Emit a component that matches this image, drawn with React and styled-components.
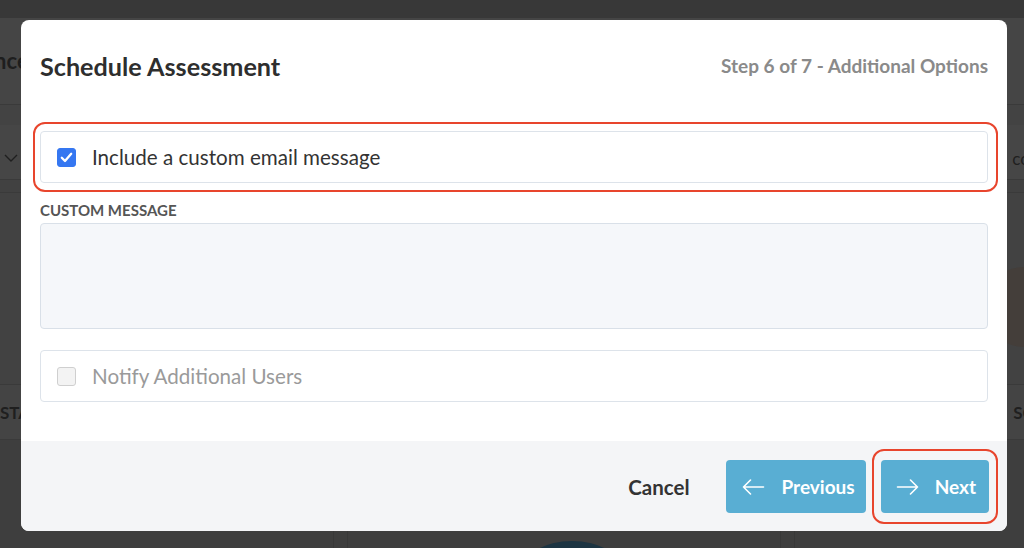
import React from "react";
import styled, { createGlobalStyle } from "styled-components";

const GlobalStyle = createGlobalStyle`
  * { box-sizing: border-box; }
  html, body {
    margin: 0;
    padding: 0;
    width: 1024px;
    height: 548px;
    overflow: hidden;
    font-family: Lato, "Open Sans", Arial, sans-serif;
  }
`;

/* ---------- dimmed page behind the modal ---------- */

const Page = styled.div`
  position: relative;
  width: 1024px;
  height: 548px;
  overflow: hidden;
  background: #3e3e3e;
  display: flex;
  flex-direction: column;
`;

const TopBar = styled.div`
  height: 18px;
  background: #383838;
  flex: none;
`;

const PageHeader = styled.div`
  height: 87px;
  background: #454545;
  border-bottom: 1px solid #3a3a3a;
  display: flex;
  align-items: center;
  flex: none;
`;

const PageTitle = styled.h2`
  margin: 0 0 2px -86px;
  font-size: 22px;
  font-weight: 700;
  color: #1e1e1e;
`;

const Strip = styled.div`
  height: ${(p) => p.$h}px;
  background: ${(p) => p.$bg};
  border-bottom: ${(p) => (p.$line ? "1px solid #3a3a3a" : "none")};
  display: flex;
  align-items: center;
  justify-content: space-between;
  flex: none;
  position: relative;
`;

const BgText = styled.span`
  font-size: 17px;
  font-weight: ${(p) => (p.$bold ? 700 : 400)};
  color: #1f1f1f;
  margin: ${(p) => p.$m || "0"};
  white-space: nowrap;
`;

const Chevron = styled.svg`
  margin-left: 4px;
  margin-top: 12px;
`;

const Blob = styled.div`
  position: absolute;
  right: -40px;
  top: 74px;
  width: 80px;
  height: 80px;
  border-radius: 50%;
  background: #443e3a;
`;

const Rest = styled.div`
  flex: 1;
  background: #3e3e3e;
  position: relative;
  display: flex;
`;

const VLine = styled.div`
  width: 1px;
  background: #383838;
  margin-left: ${(p) => p.$ml}px;
`;

const DarkCircle = styled.div`
  position: absolute;
  left: 522px;
  top: 101px;
  width: 100px;
  height: 60px;
  border-radius: 50%;
  background: #1c3442;
`;

/* ---------- modal ---------- */

const Modal = styled.div`
  position: absolute;
  left: 21px;
  top: 20px;
  width: 986px;
  height: 511px;
  background: #fff;
  border-radius: 8px;
  overflow: hidden;
  display: flex;
  flex-direction: column;
`;

const Body = styled.div`
  flex: 1;
  padding: 31px 19px 0 19px;
  display: flex;
  flex-direction: column;
`;

const Header = styled.div`
  display: flex;
  justify-content: space-between;
  align-items: center;
  line-height: 30px;
`;

const Title = styled.h1`
  margin: 0;
  font-size: 25.2px;
  font-weight: 700;
  color: #2e2e2e;
`;

const StepText = styled.span`
  font-size: 19px;
  font-weight: 700;
  color: #8a8a8a;
`;

const OptionWrap = styled.div`
  position: relative;
  margin-top: ${(p) => p.$mt}px;
`;

const OptionBox = styled.label`
  height: 52px;
  border: 1px solid #dde3ea;
  border-radius: 4px;
  background: #fff;
  display: flex;
  align-items: center;
  padding-left: 16px;
  gap: 16px;
`;

const Check = styled.span`
  width: 19px;
  height: 19px;
  border-radius: 3px;
  flex: none;
  display: flex;
  align-items: center;
  justify-content: center;
  background: ${(p) => (p.$on ? "#3577f1" : "#f3f3f3")};
  border: 1px solid ${(p) => (p.$on ? "#3577f1" : "#cfcfcf")};
`;

const OptionText = styled.span`
  font-size: 20.6px;
  color: ${(p) => (p.$muted ? "#9a9a9a" : "#333")};
`;

const Annotation = styled.div`
  position: absolute;
  left: ${(p) => p.$l}px;
  right: ${(p) => p.$r}px;
  top: ${(p) => p.$t}px;
  bottom: ${(p) => p.$b}px;
  border: 2.5px solid #e8452d;
  border-radius: 12px;
  pointer-events: none;
`;

const FieldLabel = styled.div`
  margin-top: 19px;
  font-size: 15px;
  line-height: 17px;
  font-weight: 700;
  color: #555;
  text-transform: uppercase;
`;

const MessageArea = styled.div`
  margin-top: 4px;
  height: 106px;
  border: 1px solid #d9e0e8;
  border-radius: 4px;
  background: #f5f7fa;
`;

const Footer = styled.div`
  height: 90px;
  flex: none;
  background: #f4f5f7;
  display: flex;
  align-items: center;
  justify-content: flex-end;
  padding: 1px 18px 0 0;
`;

const CancelButton = styled.button`
  border: none;
  background: transparent;
  font-family: inherit;
  font-size: 20.5px;
  font-weight: 700;
  color: #333;
  padding: 0;
  margin-right: 37px;
  cursor: pointer;
`;

const NavButton = styled.button`
  height: 53px;
  border: none;
  border-radius: 4px;
  background: #59aed3;
  color: #fff;
  font-family: inherit;
  font-size: 19px;
  font-weight: 700;
  display: flex;
  align-items: center;
  gap: 16px;
  padding: 0 ${(p) => p.$pr}px 0 ${(p) => p.$pl}px;
  cursor: pointer;
`;

const NextWrap = styled.div`
  position: relative;
  margin-left: 15px;
`;

const Arrow = ({ dir }) => (
  <svg width="23" height="16" viewBox="0 0 23 16" fill="none" stroke="#fff" strokeWidth="1.6" strokeLinecap="round" strokeLinejoin="round">
    {dir === "left" ? (
      <path d="M1.5 8h20M8.5 1 1.5 8l7 7" />
    ) : (
      <path d="M1.5 8h20M14.5 1l7 7-7 7" />
    )}
  </svg>
);

const Tick = () => (
  <svg width="13" height="11" viewBox="0 0 13 11" fill="none" stroke="#fff" strokeWidth="2.3" strokeLinecap="round" strokeLinejoin="round">
    <path d="M1.8 5.8 5 9 11.2 1.8" />
  </svg>
);

export default function App() {
  return (
    <>
      <GlobalStyle />
      <Page>
        <TopBar />
        <PageHeader>
          <PageTitle>Compliance</PageTitle>
        </PageHeader>
        <Strip $h={20} $bg="#434343" />
        <Strip $h={55} $bg="#464646" $line>
          <Chevron width="14" height="9" viewBox="0 0 14 9" fill="none" stroke="#1f1f1f" strokeWidth="1.4">
            <path d="M1 1l6 6 6-6" />
          </Chevron>
          <BgText $m="12px -44px 0 0">contact</BgText>
        </Strip>
        <Strip $h={13} $bg="#414141" $line />
        <Strip $h={192} $bg="#424242" $line>
          <Blob />
        </Strip>
        <Strip $h={55} $bg="#444444" $line>
          <BgText $bold $m="0 0 0 0">STATUS</BgText>
          <BgText $bold $m="0 -44px 0 0">SCORE</BgText>
        </Strip>
        <Rest>
          <VLine $ml={333} />
          <VLine $ml={13} />
          <VLine $ml={432} />
          <VLine $ml={13} />
          <DarkCircle />
        </Rest>

        <Modal>
          <Body>
            <Header>
              <Title>Schedule Assessment</Title>
              <StepText>Step 6 of 7 - Additional Options</StepText>
            </Header>

            <OptionWrap $mt={50}>
              <OptionBox>
                <Check $on>
                  <Tick />
                </Check>
                <OptionText>Include a custom email message</OptionText>
              </OptionBox>
              <Annotation $l={-7} $r={-10} $t={-9} $b={-9} />
            </OptionWrap>

            <FieldLabel>Custom Message</FieldLabel>
            <MessageArea />

            <OptionWrap $mt={21}>
              <OptionBox>
                <Check />
                <OptionText $muted>Notify Additional Users</OptionText>
              </OptionBox>
            </OptionWrap>
          </Body>

          <Footer>
            <CancelButton>Cancel</CancelButton>
            <NavButton $pl={16} $pr={11}>
              <Arrow dir="left" />
              Previous
            </NavButton>
            <NextWrap>
              <NavButton $pl={15} $pr={13}>
                <Arrow dir="right" />
                Next
              </NavButton>
              <Annotation $l={-9} $r={-9} $t={-11} $b={-11} />
            </NextWrap>
          </Footer>
        </Modal>
      </Page>
    </>
  );
}
